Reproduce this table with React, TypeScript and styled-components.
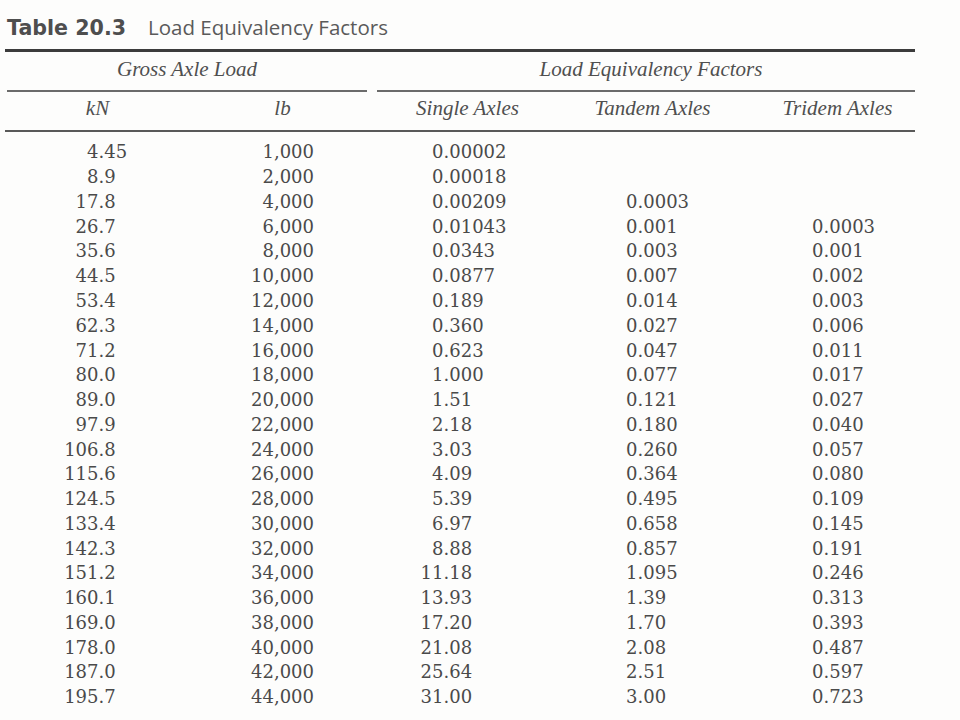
import React from "react";
import styled, { createGlobalStyle } from "styled-components";

const GlobalStyle = createGlobalStyle`
  html, body {
    margin: 0;
    padding: 0;
    background: #fdfdfc;
  }
  body {
    width: 960px;
    height: 720px;
    overflow: hidden;
  }
`;

const Page = styled.div`
  padding-left: 5px;
  width: 910px;
  color: #4a4a4a;
`;

const Title = styled.h1`
  margin: 0;
  padding: 13px 0 0 2px;
  font-family: "Open Sans", "DejaVu Sans", sans-serif;
  font-weight: 400;
  font-size: 20.5px;
  line-height: 28px;
  color: #5a5a5a;
  white-space: nowrap;
`;

const TitleNumber = styled.span`
  font-family: "DejaVu Sans", "Open Sans", sans-serif;
  font-weight: 700;
  font-size: 20.6px;
  color: #4e4e4e;
  margin-right: 22px;
`;

const Table = styled.div`
  margin-top: 7px;
  width: 910px;
  border-top: 3px solid #3c3c3c;
`;

const Row = styled.div`
  display: grid;
  grid-template-columns: repeat(5, 185px);
`;

const GroupRow = styled(Row)``;

const GroupCell = styled.div<{ $from: number; $to: number; $trim: number; $shift?: number }>`
  grid-column: ${(p) => p.$from} / ${(p) => p.$to};
  margin-left: 2px;
  margin-right: ${(p) => p.$trim}px;
  padding: 5px 0 9px ${(p) => p.$shift ?? 0}px;
  border-bottom: 2px solid #6b6b6b;
  text-align: center;
  font-family: "Liberation Serif", "Times New Roman", serif;
  font-style: italic;
  font-size: 21px;
  line-height: 24px;
  color: #4f4f4f;
`;

const HeaderRow = styled(Row)`
  width: 910px;
  border-bottom: 2px solid #595959;
`;

const HeaderCell = styled.div`
  padding: 4px 0 10px;
  text-align: center;
  font-family: "Liberation Serif", "Times New Roman", serif;
  font-style: italic;
  font-size: 21px;
  line-height: 24px;
  color: #4f4f4f;
`;

const Body = styled.div`
  padding-top: 8.4px;
`;

const DataRow = styled(Row)`
  font-family: "DejaVu Serif", "Liberation Serif", serif;
  font-size: 18px;
  line-height: 24.77px;
  color: #4a4a4a;
  white-space: nowrap;
`;

const DecimalCell = styled.div<{ $pad: number }>`
  padding-left: ${(p) => p.$pad}px;
`;

const IntPart = styled.span<{ $width: number }>`
  display: inline-block;
  width: ${(p) => p.$width}px;
  text-align: right;
`;

const RightCell = styled.div<{ $pad: number }>`
  text-align: right;
  padding-right: ${(p) => p.$pad}px;
`;

type Data = [string, string, string, string, string];

const rows: Data[] = [
  ["4.45", "1,000", "0.00002", "", ""],
  ["8.9", "2,000", "0.00018", "", ""],
  ["17.8", "4,000", "0.00209", "0.0003", ""],
  ["26.7", "6,000", "0.01043", "0.001", "0.0003"],
  ["35.6", "8,000", "0.0343", "0.003", "0.001"],
  ["44.5", "10,000", "0.0877", "0.007", "0.002"],
  ["53.4", "12,000", "0.189", "0.014", "0.003"],
  ["62.3", "14,000", "0.360", "0.027", "0.006"],
  ["71.2", "16,000", "0.623", "0.047", "0.011"],
  ["80.0", "18,000", "1.000", "0.077", "0.017"],
  ["89.0", "20,000", "1.51", "0.121", "0.027"],
  ["97.9", "22,000", "2.18", "0.180", "0.040"],
  ["106.8", "24,000", "3.03", "0.260", "0.057"],
  ["115.6", "26,000", "4.09", "0.364", "0.080"],
  ["124.5", "28,000", "5.39", "0.495", "0.109"],
  ["133.4", "30,000", "6.97", "0.658", "0.145"],
  ["142.3", "32,000", "8.88", "0.857", "0.191"],
  ["151.2", "34,000", "11.18", "1.095", "0.246"],
  ["160.1", "36,000", "13.93", "1.39", "0.313"],
  ["169.0", "38,000", "17.20", "1.70", "0.393"],
  ["178.0", "40,000", "21.08", "2.08", "0.487"],
  ["187.0", "42,000", "25.64", "2.51", "0.597"],
  ["195.7", "44,000", "31.00", "3.00", "0.723"],
];

const Decimal: React.FC<{ value: string; pad: number; width: number }> = ({ value, pad, width }) => {
  if (!value) return <DecimalCell $pad={pad} />;
  const i = value.indexOf(".");
  const intPart = i >= 0 ? value.slice(0, i) : value;
  const frac = i >= 0 ? value.slice(i) : "";
  return (
    <DecimalCell $pad={pad}>
      <IntPart $width={width}>{intPart}</IntPart>
      {frac}
    </DecimalCell>
  );
};

export default function App() {
  return (
    <>
      <GlobalStyle />
      <Page>
        <Title>
          <TitleNumber>Table 20.3</TitleNumber>Load Equivalency Factors
        </Title>
        <Table>
          <GroupRow>
            <GroupCell $from={1} $to={3} $trim={8}>
              Gross Axle Load
            </GroupCell>
            <GroupCell $from={3} $to={6} $trim={15} $shift={10}>
              Load Equivalency Factors
            </GroupCell>
          </GroupRow>
          <HeaderRow>
            <HeaderCell>kN</HeaderCell>
            <HeaderCell>lb</HeaderCell>
            <HeaderCell>Single Axles</HeaderCell>
            <HeaderCell>Tandem Axles</HeaderCell>
            <HeaderCell>Tridem Axles</HeaderCell>
          </HeaderRow>
          <Body>
            {rows.map((r) => (
              <DataRow key={r[0]}>
                <Decimal value={r[0]} pad={53.5} width={40} />
                <RightCell $pad={61}>{r[1]}</RightCell>
                <Decimal value={r[2]} pad={38.5} width={30} />
                <Decimal value={r[3]} pad={65.5} width={12} />
                <Decimal value={r[4]} pad={66.5} width={12} />
              </DataRow>
            ))}
          </Body>
        </Table>
      </Page>
    </>
  );
}
